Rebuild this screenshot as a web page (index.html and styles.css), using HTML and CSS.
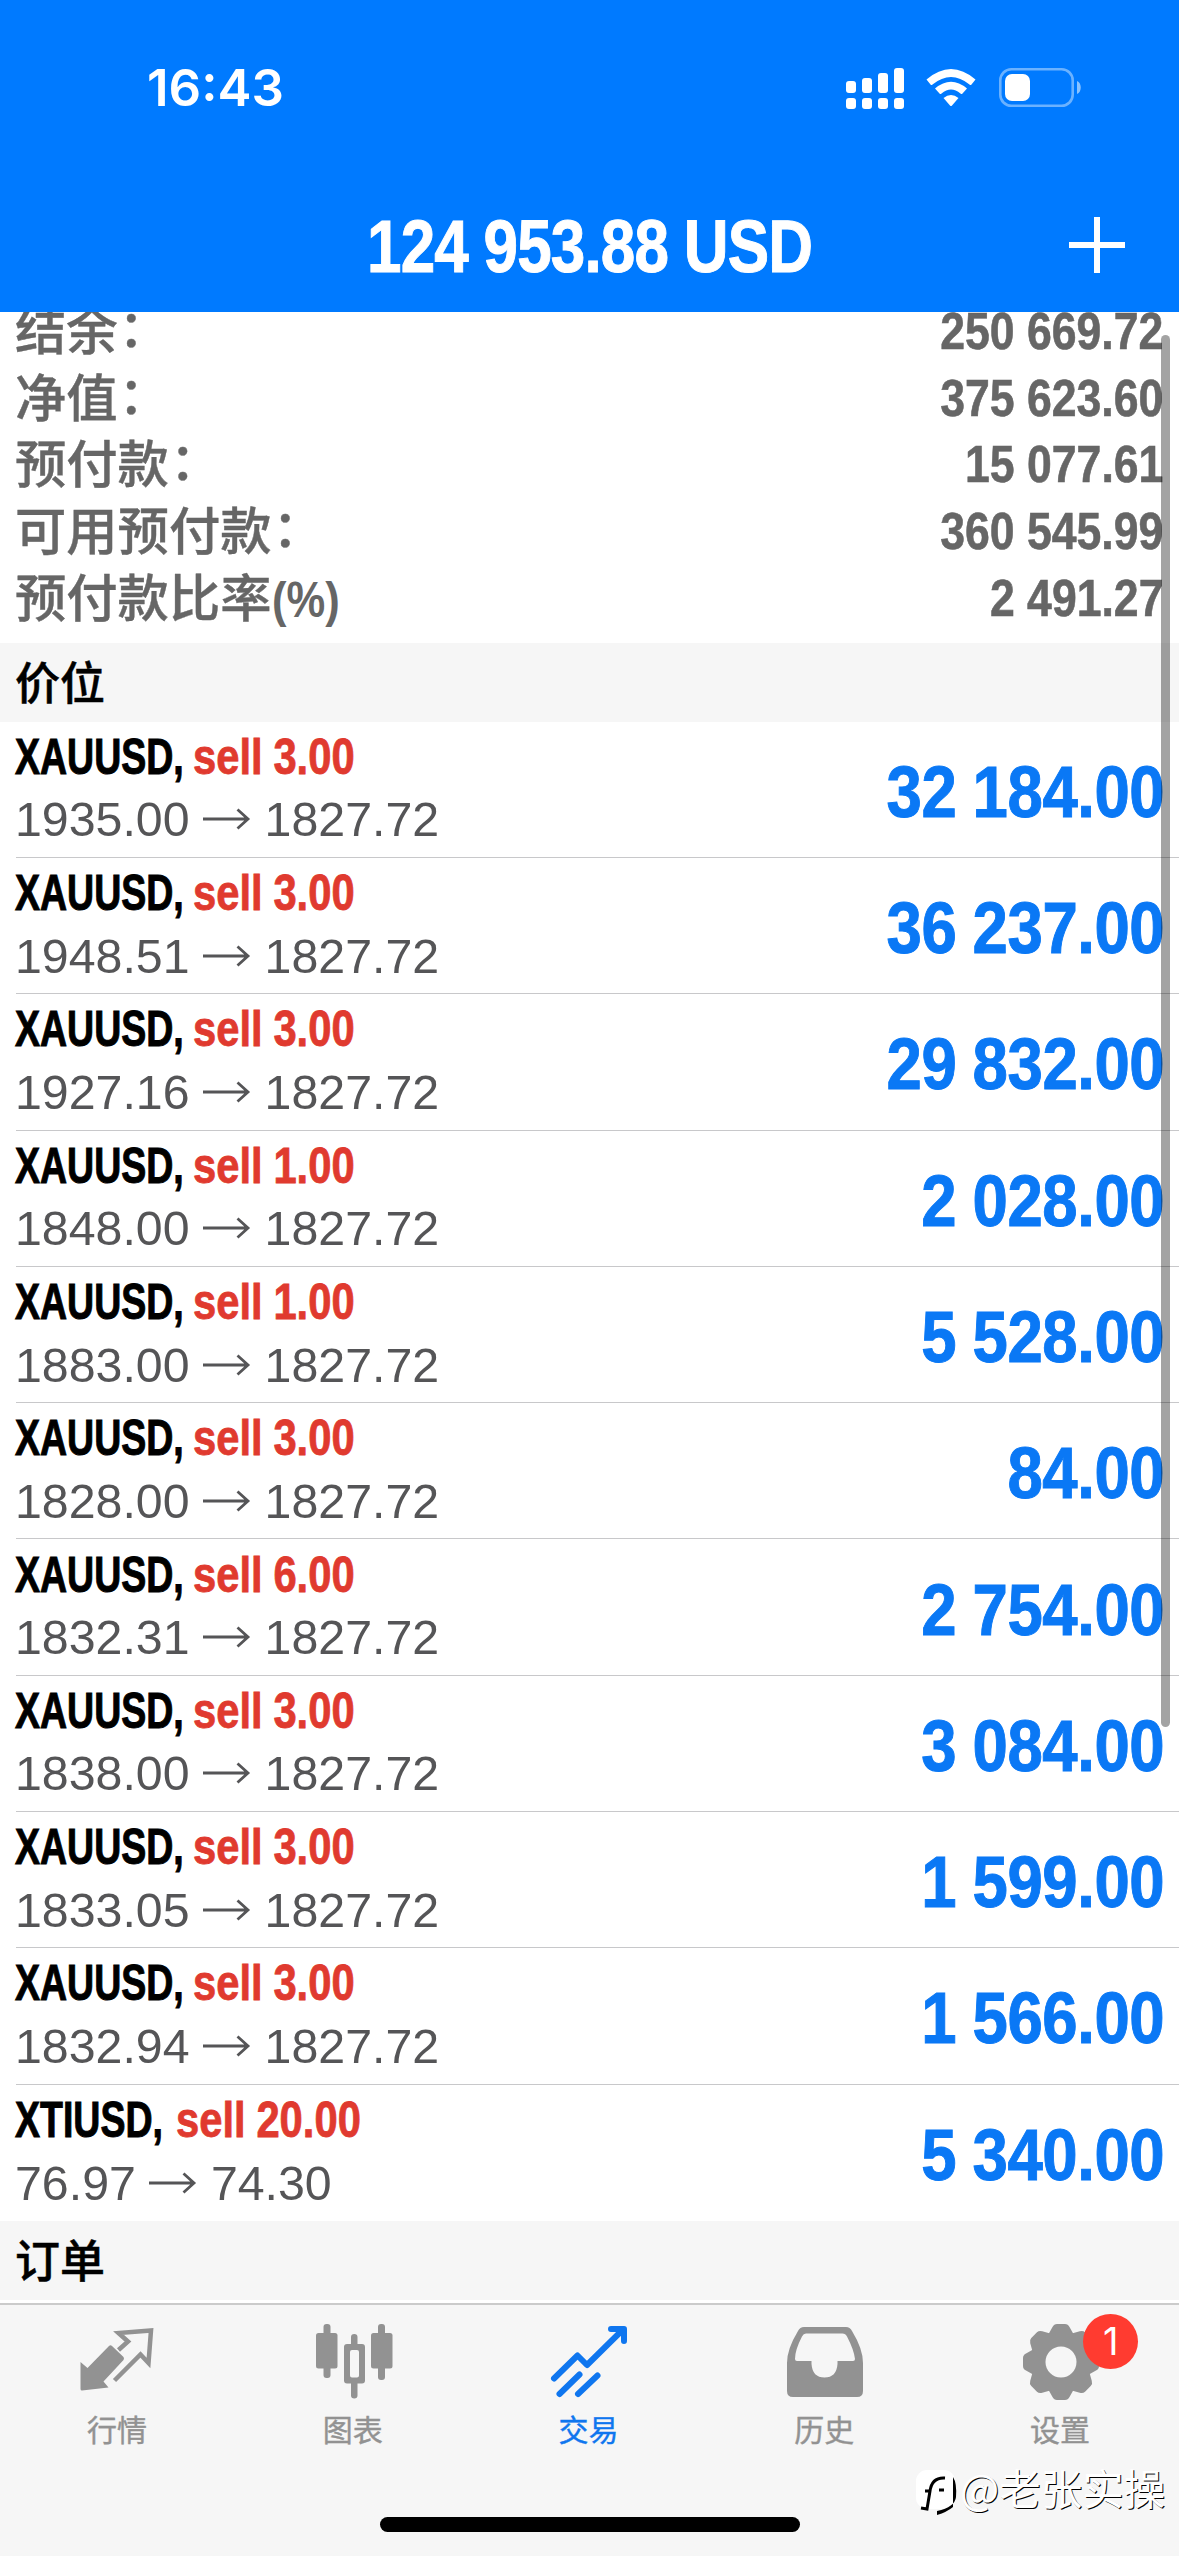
FILE: index.html
```html
<!DOCTYPE html>
<html lang="zh-CN">
<head>
  <meta charset="UTF-8">
  <meta name="viewport" content="width=device-width, initial-scale=1.0">
  <title>交易</title>
  <link rel="stylesheet" href="styles.css">
</head>
<body>
  <svg class="defs" width="0" height="0">
    <symbol id="arrow" viewBox="0 0 48 22">
      <path d="M0 11H45M34.500 1.500L45 11L34.500 20.500" fill="none" stroke="#555557" stroke-width="2.800"/>
    </symbol>
  </svg>

  <header>
    <div class="status-bar">
      <span class="time">16:43</span>
      <div class="status-icons">
        <svg class="signal" viewBox="0 0 58 41" fill="#fff">
          <rect x="0" y="13" width="10" height="12" rx="3"/>
          <rect x="16" y="10" width="10" height="15" rx="3"/>
          <rect x="32" y="5" width="10" height="20" rx="3"/>
          <rect x="48" y="0" width="10" height="25" rx="3"/>
          <rect x="0" y="30" width="10" height="11" rx="3"/>
          <rect x="16" y="30" width="10" height="11" rx="3"/>
          <rect x="32" y="30" width="10" height="11" rx="3"/>
          <rect x="48" y="30" width="10" height="11" rx="3"/>
        </svg>
        <svg class="wifi" viewBox="0 0 50 38" fill="#fff">
          <path d="M0.500 10.500Q25 -10.500 49.500 10.500L45.500 15.500Q44.500 16.500 43.500 15.500Q25 0.500 6.500 15.500Q5.500 16.500 4.500 15.500Z"/>
          <path d="M9 19.500Q25 6 41 19.500L36.500 24.500Q35.500 25.500 34.500 24.500Q25 16.500 15.500 24.500Q14.500 25.500 13.500 24.500Z"/>
          <path d="M17.500 29Q25 23 32.500 29L26 36.500Q25 37.500 24 36.500Z"/>
        </svg>
        <svg class="battery" viewBox="0 0 84 40">
          <rect x="1.300" y="1.300" width="72.400" height="36.400" rx="11" fill="none" stroke="#fff" stroke-opacity=".42" stroke-width="2.600"/>
          <rect x="6" y="6" width="25" height="27" rx="7" fill="#fff"/>
          <path d="M78 13C83 15 83 24 78 26Z" fill="#fff" fill-opacity=".55"/>
        </svg>
      </div>
    </div>
    <div class="nav-bar">
      <h1 class="profit"><span>124 953.88 USD</span></h1>
      <svg class="plus" viewBox="0 0 56 56"><path d="M28 0V56M0 28H56" stroke="#fff" stroke-width="6"/></svg>
    </div>
  </header>

  <main>
    <div class="account">
      <div class="account-row"><span class="label">结余<i>：</i></span><span class="amount">250 669.72</span></div>
      <div class="account-row"><span class="label">净值<i>：</i></span><span class="amount">375 623.60</span></div>
      <div class="account-row"><span class="label">预付款<i>：</i></span><span class="amount">15 077.61</span></div>
      <div class="account-row"><span class="label">可用预付款<i>：</i></span><span class="amount">360 545.99</span></div>
      <div class="account-row"><span class="label">预付款比率<span class="percent">(%)</span></span><span class="amount">2 491.27</span></div>
    </div>

    <h2 class="section-title">价位</h2>
    <div class="positions">
      <div class="position">
        <div class="info">
          <div class="order"><span class="symbol">XAUUSD,</span><span class="side">sell 3.00</span></div>
          <div class="prices">1935.00<svg class="arrow"><use href="#arrow"/></svg>1827.72</div>
        </div>
        <div class="gain">32 184.00</div>
      </div>
      <div class="position">
        <div class="info">
          <div class="order"><span class="symbol">XAUUSD,</span><span class="side">sell 3.00</span></div>
          <div class="prices">1948.51<svg class="arrow"><use href="#arrow"/></svg>1827.72</div>
        </div>
        <div class="gain">36 237.00</div>
      </div>
      <div class="position">
        <div class="info">
          <div class="order"><span class="symbol">XAUUSD,</span><span class="side">sell 3.00</span></div>
          <div class="prices">1927.16<svg class="arrow"><use href="#arrow"/></svg>1827.72</div>
        </div>
        <div class="gain">29 832.00</div>
      </div>
      <div class="position">
        <div class="info">
          <div class="order"><span class="symbol">XAUUSD,</span><span class="side">sell 1.00</span></div>
          <div class="prices">1848.00<svg class="arrow"><use href="#arrow"/></svg>1827.72</div>
        </div>
        <div class="gain">2 028.00</div>
      </div>
      <div class="position">
        <div class="info">
          <div class="order"><span class="symbol">XAUUSD,</span><span class="side">sell 1.00</span></div>
          <div class="prices">1883.00<svg class="arrow"><use href="#arrow"/></svg>1827.72</div>
        </div>
        <div class="gain">5 528.00</div>
      </div>
      <div class="position">
        <div class="info">
          <div class="order"><span class="symbol">XAUUSD,</span><span class="side">sell 3.00</span></div>
          <div class="prices">1828.00<svg class="arrow"><use href="#arrow"/></svg>1827.72</div>
        </div>
        <div class="gain">84.00</div>
      </div>
      <div class="position">
        <div class="info">
          <div class="order"><span class="symbol">XAUUSD,</span><span class="side">sell 6.00</span></div>
          <div class="prices">1832.31<svg class="arrow"><use href="#arrow"/></svg>1827.72</div>
        </div>
        <div class="gain">2 754.00</div>
      </div>
      <div class="position">
        <div class="info">
          <div class="order"><span class="symbol">XAUUSD,</span><span class="side">sell 3.00</span></div>
          <div class="prices">1838.00<svg class="arrow"><use href="#arrow"/></svg>1827.72</div>
        </div>
        <div class="gain">3 084.00</div>
      </div>
      <div class="position">
        <div class="info">
          <div class="order"><span class="symbol">XAUUSD,</span><span class="side">sell 3.00</span></div>
          <div class="prices">1833.05<svg class="arrow"><use href="#arrow"/></svg>1827.72</div>
        </div>
        <div class="gain">1 599.00</div>
      </div>
      <div class="position">
        <div class="info">
          <div class="order"><span class="symbol">XAUUSD,</span><span class="side">sell 3.00</span></div>
          <div class="prices">1832.94<svg class="arrow"><use href="#arrow"/></svg>1827.72</div>
        </div>
        <div class="gain">1 566.00</div>
      </div>
      <div class="position">
        <div class="info">
          <div class="order"><span class="symbol oil">XTIUSD,</span><span class="side">sell 20.00</span></div>
          <div class="prices">76.97<svg class="arrow"><use href="#arrow"/></svg>74.30</div>
        </div>
        <div class="gain">5 340.00</div>
      </div>
    </div>
    <h2 class="section-title">订单</h2>
    <div class="scrollbar"></div>
  </main>

  <footer>
    <nav class="tabs">
      <a class="tab">
        <svg class="tab-icon" viewBox="0 0 76 76" fill="#929292">
          <path d="M0.500 36L7.500 42L29 20Q30.500 18.500 32 20L43.500 31Q44.500 32.500 43.500 34L23.500 55.500L28.500 61.500L2 64.500Q0.500 64.500 0.500 63Z"/>
          <path d="M38.500 24L48 15.500L38.500 7L71 4.500L68.500 37L60.500 28.500L34.500 54.500" fill="none" stroke="#929292" stroke-width="4.500"/>
        </svg>
        <span>行情</span>
      </a>
      <a class="tab">
        <svg class="tab-icon" viewBox="0 0 76 76" fill="#929292">
          <rect x="7.500" y="-2" width="7" height="54" rx="3"/>
          <rect x="0" y="7" width="21.500" height="35.500" rx="2.500"/>
          <rect x="62" y="-2" width="7" height="56" rx="3"/>
          <rect x="55" y="7" width="21.500" height="35.500" rx="2.500"/>
          <path d="M35 18V11Q35 8 38.300 8Q41.500 8 41.500 11V18H46Q49 18 49 21V54.500Q49 57.500 46 57.500H41.500V69.500Q41.500 72.500 38.300 72.500Q35 72.500 35 69.500V57.500H31Q28 57.500 28 54.500V21Q28 18 31 18ZM36 24Q34 24 34 26V49.500Q34 51.500 36 51.500H41Q43 51.500 43 49.500V26Q43 24 41 24Z" fill-rule="evenodd"/>
        </svg>
        <span>图表</span>
      </a>
      <a class="tab active">
        <svg class="tab-icon" viewBox="0 0 76 76" fill="none" stroke="#0f76ef" stroke-width="6" stroke-linecap="round">
          <path d="M3 52.500L26.500 29.500L36 39L72 3.500" stroke-linejoin="round"/>
          <path d="M60 3H73V15" stroke-linejoin="round"/>
          <path d="M65 3H73V11Z" fill="#0f76ef" stroke-width="3"/>
          <path d="M8.500 68L28.500 48.500M27 68L46.500 49.500"/>
        </svg>
        <span>交易</span>
      </a>
      <a class="tab">
        <svg class="tab-icon" viewBox="0 0 76 76" fill="#929292">
          <path d="M17 1H59Q63 1 65 5Q76 23 76 37V65Q76 71 70 71H6Q0 71 0 65V37Q0 23 11 5Q13 1 17 1ZM19 7.500Q16.500 7.500 15 10.500Q8 24 8 33Q8 35 10 35H24.500V38Q25.500 51.500 37.500 51.500Q49.500 51.500 50.500 38V35H66Q68 35 68 33Q67 24 60 10.500Q58.500 7.500 55.500 7.500Z" fill-rule="evenodd"/>
        </svg>
        <span>历史</span>
      </a>
      <a class="tab">
        <svg class="tab-icon" viewBox="0 0 76 76">
          <g fill="#929292">
            <circle cx="38" cy="36" r="30"/>
            <path id="tooth" d="M25 9L29.500 1Q31 -2 34 -2H42Q45 -2 46.500 1L51 9ZM25 63L29.500 71Q31 74 34 74H42Q45 74 46.500 71L51 63Z"/>
            <use href="#tooth" transform="rotate(45 38 36)"/>
            <use href="#tooth" transform="rotate(90 38 36)"/>
            <use href="#tooth" transform="rotate(135 38 36)"/>
          </g>
          <circle cx="38" cy="36" r="15.500" fill="#f6f6f6"/>
        </svg>
        <span>设置</span>
        <b class="badge">1</b>
      </a>
    </nav>
    <div class="home-bar"></div>
  </footer>

  <div class="watermark">
    <svg viewBox="0 0 44 48">
      <rect x="1" y="1" width="39" height="39" rx="11" fill="#fff"/>
      <path d="M38 8Q42 14 41 28Q40 38 22 42V46Q32 43 38 38" fill="#000"/>
      <path d="M10 22H15Q17 8 30 9M15 22L12 40L6 39M24 21H29" fill="none" stroke="#000" stroke-width="3"/>
    </svg>
    <span>@老张实操</span>
  </div>
</body>
</html>
```
FILE: styles.css
```css
body {
  margin: 0;
  width: 1179px;
  height: 2556px;
  display: flex;
  flex-direction: column;
  position: relative;
  overflow: hidden;
  background-color: #fff;
  font-family: "Liberation Sans", "Noto Sans CJK SC", sans-serif;
}

.defs {
  position: absolute;
}

header {
  height: 312px;
  flex: none;
  background-color: #007aff;
  color: #fff;
}

.status-bar {
  display: flex;
  justify-content: space-between;
  align-items: center;
  height: 176px;
  padding: 0 96px 0 147px;
  box-sizing: border-box;
}

.time {
  margin-top: -1px;
  font-family: Inter, sans-serif;
  font-weight: 600;
  font-size: 51px;
}

.status-icons {
  display: flex;
  align-items: center;
}

.signal {
  width: 58px;
  height: 41px;
  margin-right: 22px;
}

.wifi {
  width: 50px;
  height: 38px;
  margin-right: 23px;
}

.battery {
  width: 84px;
  height: 40px;
}

.nav-bar {
  display: grid;
  grid-template-columns: 1fr auto 1fr;
  align-items: center;
  height: 138px;
}

.profit {
  grid-column: 2;
  margin: 0;
  width: 444px;
  display: flex;
  justify-content: center;
  font-size: 74px;
  white-space: nowrap;
}

.profit span {
  padding-top: 2px;
  letter-spacing: -1px;
  word-spacing: -1px;
  -webkit-text-stroke: 1px #fff;
  transform: scaleX(0.838);
}

.plus {
  width: 56px;
  height: 56px;
  justify-self: end;
  margin-right: 54px;
}

main {
  height: 1991px;
  flex: none;
  overflow: hidden;
  position: relative;
}

.account {
  margin-top: -14px;
  padding: 0 16px 11.4px 15px;
  color: #666;
}

.account-row {
  display: flex;
  justify-content: space-between;
  height: 66.67px;
  line-height: 66px;
}

.label {
  margin-top: -3px;
  font-family: "Noto Sans CJK SC", sans-serif;
  font-weight: 500;
  font-size: 51.3px;
  -webkit-text-stroke: 0.4px #666;
}

/* fullwidth colon is raised to the middle of the line */
.label i {
  display: inline-block;
  font-style: normal;
  transform: translate(1px, -3px);
}

.amount {
  font-weight: bold;
  font-size: 52px;
  -webkit-text-stroke: 0.6px #666;
  transform: scaleX(0.857);
  transform-origin: right;
}

.percent {
  display: inline-block;
  font-family: "Liberation Sans", sans-serif;
  font-weight: bold;
  font-size: 50px;
  -webkit-text-stroke: 0;
  transform: scaleX(0.87);
  transform-origin: left;
}

.section-title {
  margin: 0;
  height: 79px;
  line-height: 76px;
  padding-left: 15px;
  background-color: #f6f6f6;
  color: #000;
  font-family: "Noto Sans CJK SC", sans-serif;
  font-weight: 500;
  font-size: 45px;
  -webkit-text-stroke: 0.5px #000;
}

.position {
  display: flex;
  justify-content: space-between;
  align-items: center;
  height: 136.3px;
  margin-left: 16px;
  padding-right: 15px;
  box-sizing: border-box;
  border-bottom: 1px solid #c8c8ca;
}

.position:last-child {
  border-bottom: none;
}

.order {
  display: flex;
  height: 63px;
  align-items: center;
  margin-top: -3px;
  font-size: 50px;
  font-weight: bold;
  white-space: nowrap;
}

/* width is the narrowed text plus the gap, the unscaled text overflows it */
.symbol {
  flex: none;
  width: 178px;
  margin-left: -1px;
  color: #000;
  -webkit-text-stroke: 1px #000;
  transform: scaleX(0.75);
  transform-origin: left;
}

.oil {
  width: 161px;
}

.side {
  color: #e03a2f;
  word-spacing: -1px;
  -webkit-text-stroke: 0.8px #e03a2f;
  transform: scaleX(0.835);
  transform-origin: left;
}

.prices {
  display: flex;
  align-items: center;
  height: 62px;
  margin-left: -1px;
  color: #555557;
  font-size: 48.3px;
}

.arrow {
  width: 48px;
  height: 22px;
  margin: 0 14px 0 13px;
}

.gain {
  padding-top: 4px;
  color: #0a78f5;
  font-weight: bold;
  font-size: 73px;
  letter-spacing: -0.5px;
  word-spacing: -1px;
  -webkit-text-stroke: 1px #0a78f5;
  transform: scaleX(0.87);
  transform-origin: right;
}

.scrollbar {
  position: absolute;
  top: 23px;
  right: 9px;
  width: 9px;
  height: 1392px;
  border-radius: 5px;
  background-color: rgba(0, 0, 0, 0.36);
}

footer {
  flex: 1;
  display: flex;
  flex-direction: column;
  align-items: center;
  border-top: 2px solid #cbcbcb;
  background-color: #f6f6f6;
}

.tabs {
  display: flex;
  width: 100%;
  height: 212px;
}

.tab {
  flex: 1;
  display: flex;
  flex-direction: column;
  align-items: center;
  padding-top: 21px;
  position: relative;
  color: #929292;
  font-family: "Noto Sans CJK SC", sans-serif;
  font-size: 30px;
  line-height: 40px;
}

.tab-icon {
  width: 76px;
  height: 76px;
  margin-bottom: 6px;
  overflow: visible;
}

.tab span {
  margin-right: 2px;
  -webkit-text-stroke: 0.4px;
}

.active {
  color: #0f76ef;
}

.badge {
  position: absolute;
  top: 9px;
  left: 140px;
  width: 55px;
  height: 55px;
  border-radius: 50%;
  background-color: #ff3b30;
  color: #fff;
  font-family: Inter, sans-serif;
  font-weight: 400;
  font-size: 38px;
  line-height: 55px;
  text-align: center;
}

.home-bar {
  width: 420px;
  height: 15px;
  border-radius: 8px;
  background-color: #000;
}

.watermark {
  position: absolute;
  left: 915px;
  top: 2469px;
  display: flex;
  height: 48px;
  color: #fff;
  font-family: "Noto Sans CJK SC", sans-serif;
  font-size: 41.5px;
  line-height: 36px;
  text-shadow: 1px 1px 0 #000;
}

.watermark svg {
  width: 44px;
  height: 48px;
  margin-right: 1px;
}
```
